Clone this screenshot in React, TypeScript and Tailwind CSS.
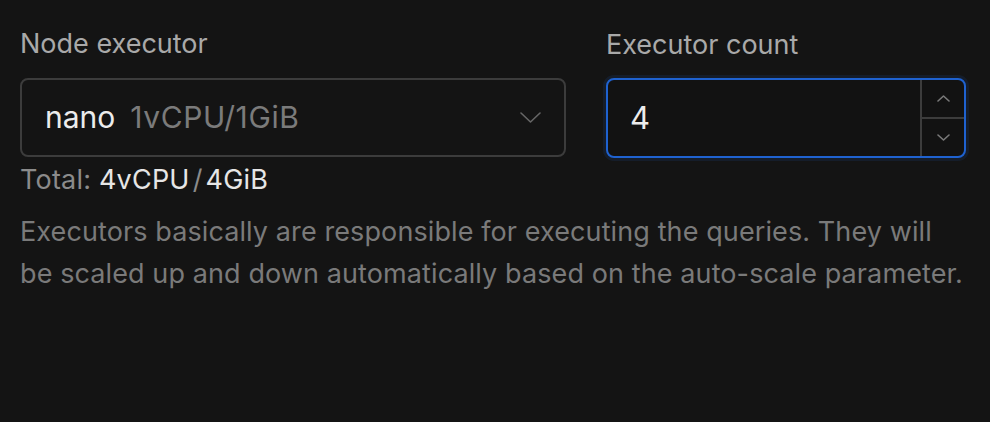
function Chevron({ up = false, w, h, className }: { up?: boolean; w: number; h: number; className?: string }) {
  return (
    <svg width={w} height={h} viewBox={`0 0 ${w} ${h}`} fill="none" className={className}>
      <polyline
        points={up ? `1,${h - 1} ${w / 2},1 ${w - 1},${h - 1}` : `1,1 ${w / 2},${h - 1} ${w - 1},1`}
        stroke="currentColor"
        strokeWidth={1.6}
        strokeLinecap="round"
        strokeLinejoin="round"
      />
    </svg>
  );
}

export default function App() {
  return (
    <div
      className="min-h-screen w-full bg-[#141414] px-5 pt-[27px]"
      style={{ fontFamily: 'Inter, "Noto Sans", sans-serif' }}
    >
      <div className="flex gap-10">
        {/* node executor */}
        <div className="w-[546px]">
          <label className="block text-[27px] leading-[34px] text-[#a9a9a9]">Node executor</label>
          <div className="mt-[17px] flex h-[79px] items-center justify-between rounded-[8px] border-2 border-[#3c3c3c] bg-[#141414] pl-[23px] pr-[23px]">
            <div className="flex items-baseline gap-[15px] text-[30px]">
              <span className="text-[#ececec]">nano</span>
              <span className="tracking-[0.6px] text-[#7b7b7b]">1vCPU/1GiB</span>
            </div>
            <Chevron w={21} h={11} className="text-[#666666]" />
          </div>
          <div className="mt-[6px] text-[27px] leading-[34px] tracking-[0.2px] text-[#8b8b8b]">
            Total: <span className="text-[#e6e6e6]">4vCPU</span>
            <span className="mx-[3px] text-[#8b8b8b]">/</span>
            <span className="text-[#e6e6e6]">4GiB</span>
          </div>
        </div>

        {/* executor count */}
        <div className="w-[360px]">
          <label className="block pt-[1px] text-[27px] leading-[34px] text-[#a9a9a9]">Executor count</label>
          <div className="mt-[16px] flex h-[80px] rounded-[8px] border-2 border-[#1f62d0] bg-[#121212] shadow-[0_0_0_3px_rgba(31,98,208,0.12)]">
            <div className="flex flex-1 items-center pl-[22px] text-[31px] text-[#ececec]">4</div>
            <div className="flex w-[44px] flex-col border-l-2 border-[#3c3c3c]">
              <button className="flex flex-1 items-center justify-center border-b-2 border-[#3c3c3c] text-[#7a7a7a]">
                <Chevron up w={13} h={7} />
              </button>
              <button className="flex flex-1 items-center justify-center text-[#7a7a7a]">
                <Chevron w={13} h={7} />
              </button>
            </div>
          </div>
        </div>
      </div>

      <p className="mt-[14px] text-[27px] leading-[42px] tracking-[0.1px] text-[#7a7a7a]">
        Executors basically are responsible for executing the queries. They will
        <br />
        be scaled up and down automatically based on the auto-scale parameter.
      </p>
    </div>
  );
}
